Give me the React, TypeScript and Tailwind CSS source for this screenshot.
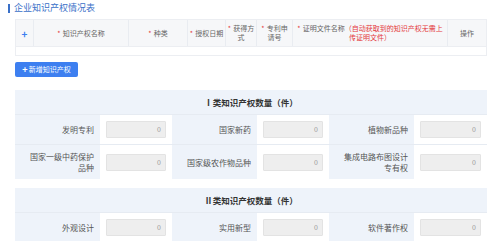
import React from "react";

const font = { fontFamily: '"Noto Sans CJK SC", "Noto Sans", sans-serif' };

function Star() {
  return <span className="mr-[2px] text-[#e4393c]">*</span>;
}

function Head({ children, className = "text-[#666]" }: { children: React.ReactNode; className?: string }) {
  return (
    <div
      className={`flex items-center justify-center whitespace-nowrap border-r border-[#e9ecf1] text-center leading-[9px] last:border-r-0 ${className}`}
    >
      {children}
    </div>
  );
}

function Field({ label }: { label: React.ReactNode }) {
  return (
    <>
      <div className="flex items-center justify-end bg-[#eef3fa] px-[6px] text-right leading-[11px] text-[#555]">
        {label}
      </div>
      <div className="flex items-center bg-white px-[6px]">
        <div className="flex h-[17px] w-full items-center justify-end rounded-[1px] border border-[#e3e3e3] bg-[#eeeeee] pr-[4px] text-[7px] text-[#999]">
          0
        </div>
      </div>
    </>
  );
}

function Section({ title, rows }: { title: string; rows: { labels: React.ReactNode[]; h: string }[] }) {
  return (
    <div className="mx-[15px] w-[472px] text-[8px]">
      <div className="flex h-[24px] items-center justify-center bg-[#eef3fa] text-[8.5px] font-bold text-[#333]">
        {title}
      </div>
      {rows.map((r, i) => (
        <div
          key={i}
          className={`grid grid-cols-[85px_72px_85px_72px_85px_73px] border-t border-[#e6ebf2] ${r.h}`}
        >
          {r.labels.map((l, j) => (
            <Field key={j} label={l} />
          ))}
        </div>
      ))}
    </div>
  );
}

export default function App() {
  return (
    <div className="h-[246px] w-[500px] overflow-hidden bg-white" style={font}>
      <div className="flex h-[16px] items-center pl-[8px]">
        <div className="h-[9px] w-[2px] bg-[#3a70c8]" />
        <span className="ml-[4px] text-[9px] text-[#3a70c8]">企业知识产权情况表</span>
      </div>

      <div className="mx-[15px] mt-[3px] w-[472px] border border-[#eceef2]">
        <div className="grid h-[26px] grid-cols-[18px_95px_59px_38px_31px_36px_155px_38px] bg-[#f6f7f9] text-[7px]">
          <Head className="text-[10px] font-bold text-[#3b7ff0]">+</Head>
          <Head>
            <Star />
            知识产权名称
          </Head>
          <Head>
            <Star />
            种类
          </Head>
          <Head>
            <Star />
            授权日期
          </Head>
          <Head>
            <span>
              <Star />
              获得方
              <br />式
            </span>
          </Head>
          <Head>
            <span>
              <Star />
              专利申
              <br />
              请号
            </span>
          </Head>
          <Head>
            <span>
              <Star />
              证明文件名称<span className="text-[#e4393c]">（自动获取到的知识产权无需上</span>
              <br />
              <span className="text-[#e4393c]">传证明文件）</span>
            </span>
          </Head>
          <Head>操作</Head>
        </div>
        <div className="h-[9px] border-t border-[#eceef2] bg-white" />
      </div>

      <div className="mx-[15px] mt-[6px]">
        <button className="flex h-[15px] w-[63px] items-center justify-center rounded-[2px] bg-[#3d7ff0] text-[7px] text-white">
          <span className="mr-[1px] text-[9px] font-bold leading-none">+</span>新增知识产权
        </button>
      </div>

      <div className="mt-[13px]">
        <Section
          title="Ⅰ类知识产权数量（件）"
          rows={[
            { labels: ["发明专利", "国家新药", "植物新品种"], h: "h-[30px]" },
            {
              labels: [
                <span>
                  国家一级中药保护
                  <br />
                  品种
                </span>,
                "国家级农作物品种",
                <span>
                  集成电路布图设计
                  <br />
                  专有权
                </span>,
              ],
              h: "h-[35px]",
            },
          ]}
        />
      </div>

      <div className="mt-[9px]">
        <Section
          title="Ⅱ类知识产权数量（件）"
          rows={[{ labels: ["外观设计", "实用新型", "软件著作权"], h: "h-[29px]" }]}
        />
      </div>
    </div>
  );
}
